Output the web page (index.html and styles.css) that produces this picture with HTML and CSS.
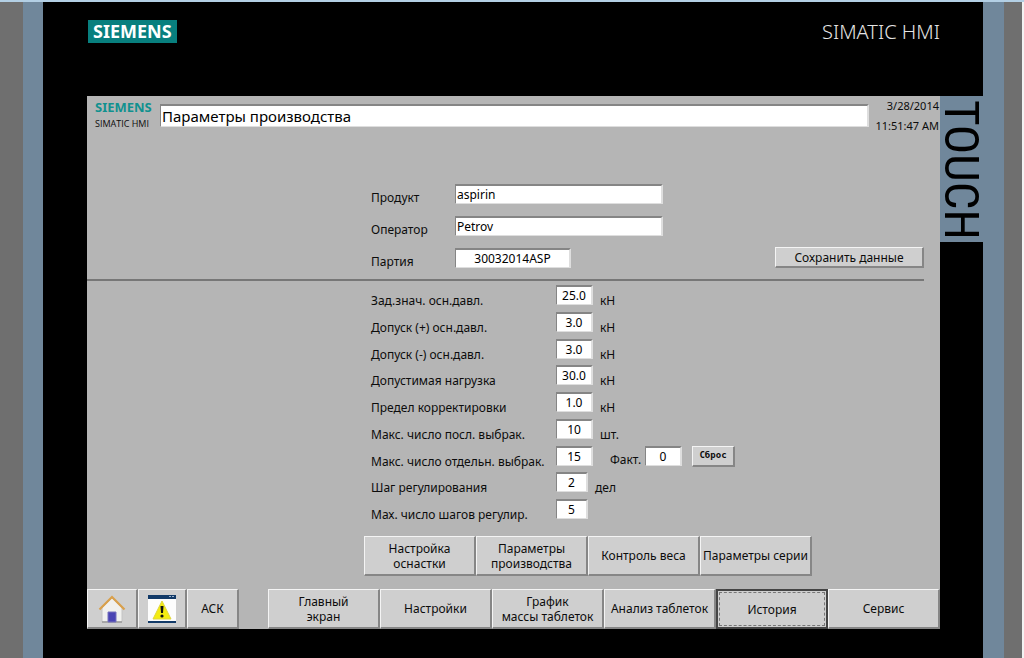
FILE: index.html
```html
<!DOCTYPE html>
<html lang="ru">
<head>
<meta charset="utf-8">
<title>SIMATIC HMI</title>
<link rel="stylesheet" href="styles.css">
</head>
<body>
<div class="device">
  <header class="bezel-top">
    <span class="brand">SIEMENS</span>
    <span class="model">SIMATIC HMI</span>
  </header>
  <div class="bezel-body">
    <main class="screen">
      <div class="top">
        <div class="logo"><strong>SIEMENS</strong><span>SIMATIC HMI</span></div>
        <input class="field title" aria-label="Экран" value="Параметры производства">
        <div class="clock"><span>3/28/2014</span><span>11:51:47 AM</span></div>
      </div>

      <section class="product">
        <div class="product-grid">
          <label for="product">Продукт</label>
          <input class="field" id="product" value="aspirin">
          <label for="operator">Оператор</label>
          <input class="field" id="operator" value="Petrov">
          <label for="batch">Партия</label>
          <input class="field batch" id="batch" value="30032014ASP">
        </div>
        <button class="btn save">Сохранить данные</button>
      </section>

      <section class="params">
        <div class="row"><label for="p1">Зад.знач. осн.давл.</label><input class="field num" id="p1" value="25.0"><span class="unit">кН</span></div>
        <div class="row"><label for="p2">Допуск (+) осн.давл.</label><input class="field num" id="p2" value="3.0"><span class="unit">кН</span></div>
        <div class="row"><label for="p3">Допуск (-) осн.давл.</label><input class="field num" id="p3" value="3.0"><span class="unit">кН</span></div>
        <div class="row"><label for="p4">Допустимая нагрузка</label><input class="field num" id="p4" value="30.0"><span class="unit">кН</span></div>
        <div class="row"><label for="p5">Предел корректировки</label><input class="field num" id="p5" value="1.0"><span class="unit">кН</span></div>
        <div class="row"><label for="p6">Макс. число посл. выбрак.</label><input class="field num" id="p6" value="10"><span class="unit">шт.</span></div>
        <div class="row"><label for="p7">Макс. число отдельн. выбрак.</label><input class="field num" id="p7" value="15"><label class="fact" for="fact">Факт.</label><input class="field num" id="fact" value="0"><button class="btn reset">Сброс</button></div>
        <div class="row"><label for="p8">Шаг регулирования</label><input class="field num small" id="p8" value="2"><span class="unit">дел</span></div>
        <div class="row"><label for="p9">Мах. число шагов регулир.</label><input class="field num small" id="p9" value="5"></div>
      </section>

      <nav class="subnav">
        <button class="btn">Настройка<br>оснастки</button>
        <button class="btn">Параметры<br>производства</button>
        <button class="btn">Контроль веса</button>
        <button class="btn">Параметры серии</button>
      </nav>

      <nav class="nav">
        <div class="tools">
          <button class="btn" aria-label="Домой">
            <svg width="28" height="28" viewBox="0 0 28 28">
              <path d="M4 13 14 3l10 10v14H4z" fill="#f1f1ef" stroke="#c4c4c4"/>
              <path d="M4 27h20" stroke="#999" stroke-width="1.500"/>
              <path d="M1.500 14.500 14 2l12.500 12.500" fill="none" stroke="#d9a04c" stroke-width="2.200"/>
              <path d="M10 17h8v10h-8z" fill="#4a44b4" stroke="#7773bd"/>
            </svg>
          </button>
          <button class="btn" aria-label="Сообщения">
            <svg width="28" height="28" viewBox="0 0 28 28">
              <path d="M0 0h28v28H0z" fill="#fdfdfd"/>
              <path d="M0 0h28v4H0z" fill="#123a68"/>
              <path d="M21 1.500h2M24 1.500h2" stroke="#9db4cf"/>
              <path d="M0 27h28" stroke="#123a68" stroke-width="2"/>
              <path d="M14 6 23 24H5z" fill="#f4ec12" stroke="#e0d63c"/>
              <path d="M12.500 11h3l-.5 7h-2z" fill="#111"/>
              <circle cx="14" cy="21" r="1.600" fill="#111"/>
            </svg>
          </button>
          <button class="btn">АСК</button>
        </div>
        <div class="pages">
          <button class="btn">Главный<br>экран</button>
          <button class="btn">Настройки</button>
          <button class="btn">График<br>массы таблеток</button>
          <button class="btn">Анализ таблеток</button>
          <button class="btn focused"><span>История</span></button>
          <button class="btn">Сервис</button>
        </div>
      </nav>
    </main>
    <aside class="touch">TOUCH</aside>
  </div>
</div>
<div class="scroll"></div>
</body>
</html>
```
FILE: styles.css
```css
* { box-sizing: border-box; }
body {
  margin: 0;
  min-height: 100vh;
  display: flex;
  border-top: 2px solid #b3cfe4;
  background: #6f6f6f;
  font: 12px/15px "Noto Sans", sans-serif;
  color: #0c0c0c;
}
.device {
  flex: 1;
  margin: 0 18px 0 23px;
  border: solid #70879b;
  border-width: 0 21px 0 20px;
  background: #000;
}
.scroll { width: 2px; background: #f2f2f2; }
.bezel-top {
  height: 94px;
  padding: 18px 43px 0 45px;
  display: flex;
  justify-content: space-between;
  align-items: flex-start;
}
.brand {
  padding: 0 5px;
  background: #087f7e;
  color: #fff;
  font: bold 18px/23px "Noto Sans", sans-serif;
}
.model { color: #e4e4e4; font: 300 20px/23px "Noto Sans", "Open Sans", sans-serif; }
.bezel-body { display: flex; align-items: flex-start; padding-left: 44px; }
.screen { flex: 1; background: #b5b5b5; }
.touch {
  width: 43px;
  height: 146px;
  padding-top: 4px;
  background: #70879b;
  color: #000;
  font: 49px/43px "Liberation Sans Narrow", "Roboto Condensed", "Liberation Sans", sans-serif;
  writing-mode: vertical-rl;
}

.top { display: flex; padding: 4px 1px 0 8px; }
.logo { width: 65px; display: flex; flex-direction: column; font: 9px/17px "Open Sans", sans-serif; }
.logo strong { color: #10918f; font: bold 13px/15px "Noto Sans", sans-serif; }
.clock { width: 70px; text-align: right; display: flex; flex-direction: column; font-size: 11px; line-height: 20px; margin-top: -4px; }
.field {
  height: 20px;
  width: 100%;
  min-width: 0;
  padding: 0 1px;
  border: 1px solid;
  border-width: 2px 2px 1px 1px;
  border-color: #858585 #dedede #dedede #858585;
  border-radius: 0;
  background: #fff;
  color: #000;
  font: inherit;
}
.title { flex: 1; height: 23px; margin-top: 4px; font-size: 15px; }

.product {
  margin-right: 16px;
  padding: 48px 0 11px 284px;
  display: flex;
  justify-content: space-between;
  align-items: flex-end;
  border-bottom: 2px solid #777;
}
.product-grid { display: grid; grid-template-columns: 84px 208px; row-gap: 12px; }
.product-grid label { padding-top: 6px; height: 20px; }
.batch { width: 116px; text-align: center; }

.btn {
  padding: 0;
  border: solid;
  border-width: 1px 2px 2px 1px;
  border-color: #f4f4f4 #868686 #868686 #f4f4f4;
  border-radius: 0;
  background: #cfcfcf;
  color: #0c0c0c;
  font: inherit;
}
.save { width: 149px; height: 21px; line-height: 15px; }

.params { display: grid; grid-auto-rows: 1fr; height: 241px; margin: 4px 0 0 284px; }
.row { display: flex; align-items: flex-start; }
.row label { width: 185px; padding-top: 8px; white-space: nowrap; }
.row .fact { width: 52px; padding-left: 17px; padding-top: 6px; }
.unit { padding: 8px 0 0 7px; }
.num { width: 37px; text-align: center; }
.small { width: 32px; }
.reset { width: 43px; height: 21px; margin-left: 10px; font: bold 9px/15px "DejaVu Sans Mono", monospace; }

.subnav { display: flex; padding-left: 277px; margin-top: 10px; }
.subnav .btn { width: 112px; height: 40px; white-space: nowrap; }
.nav { display: flex; gap: 29px; margin-top: 13px; }
.nav .btn { height: 40px; white-space: nowrap; }
.tools { display: grid; grid-template-columns: 51px 49px 52px; }
.tools svg { display: block; margin: 0 auto; }
.pages { flex: 1; display: grid; grid-template-columns: repeat(6, 1fr); }
.nav .focused { padding: 1px; border: 2px solid #444; }
.focused span { display: grid; place-items: center; height: 100%; border: 1px dashed #777; }
```
